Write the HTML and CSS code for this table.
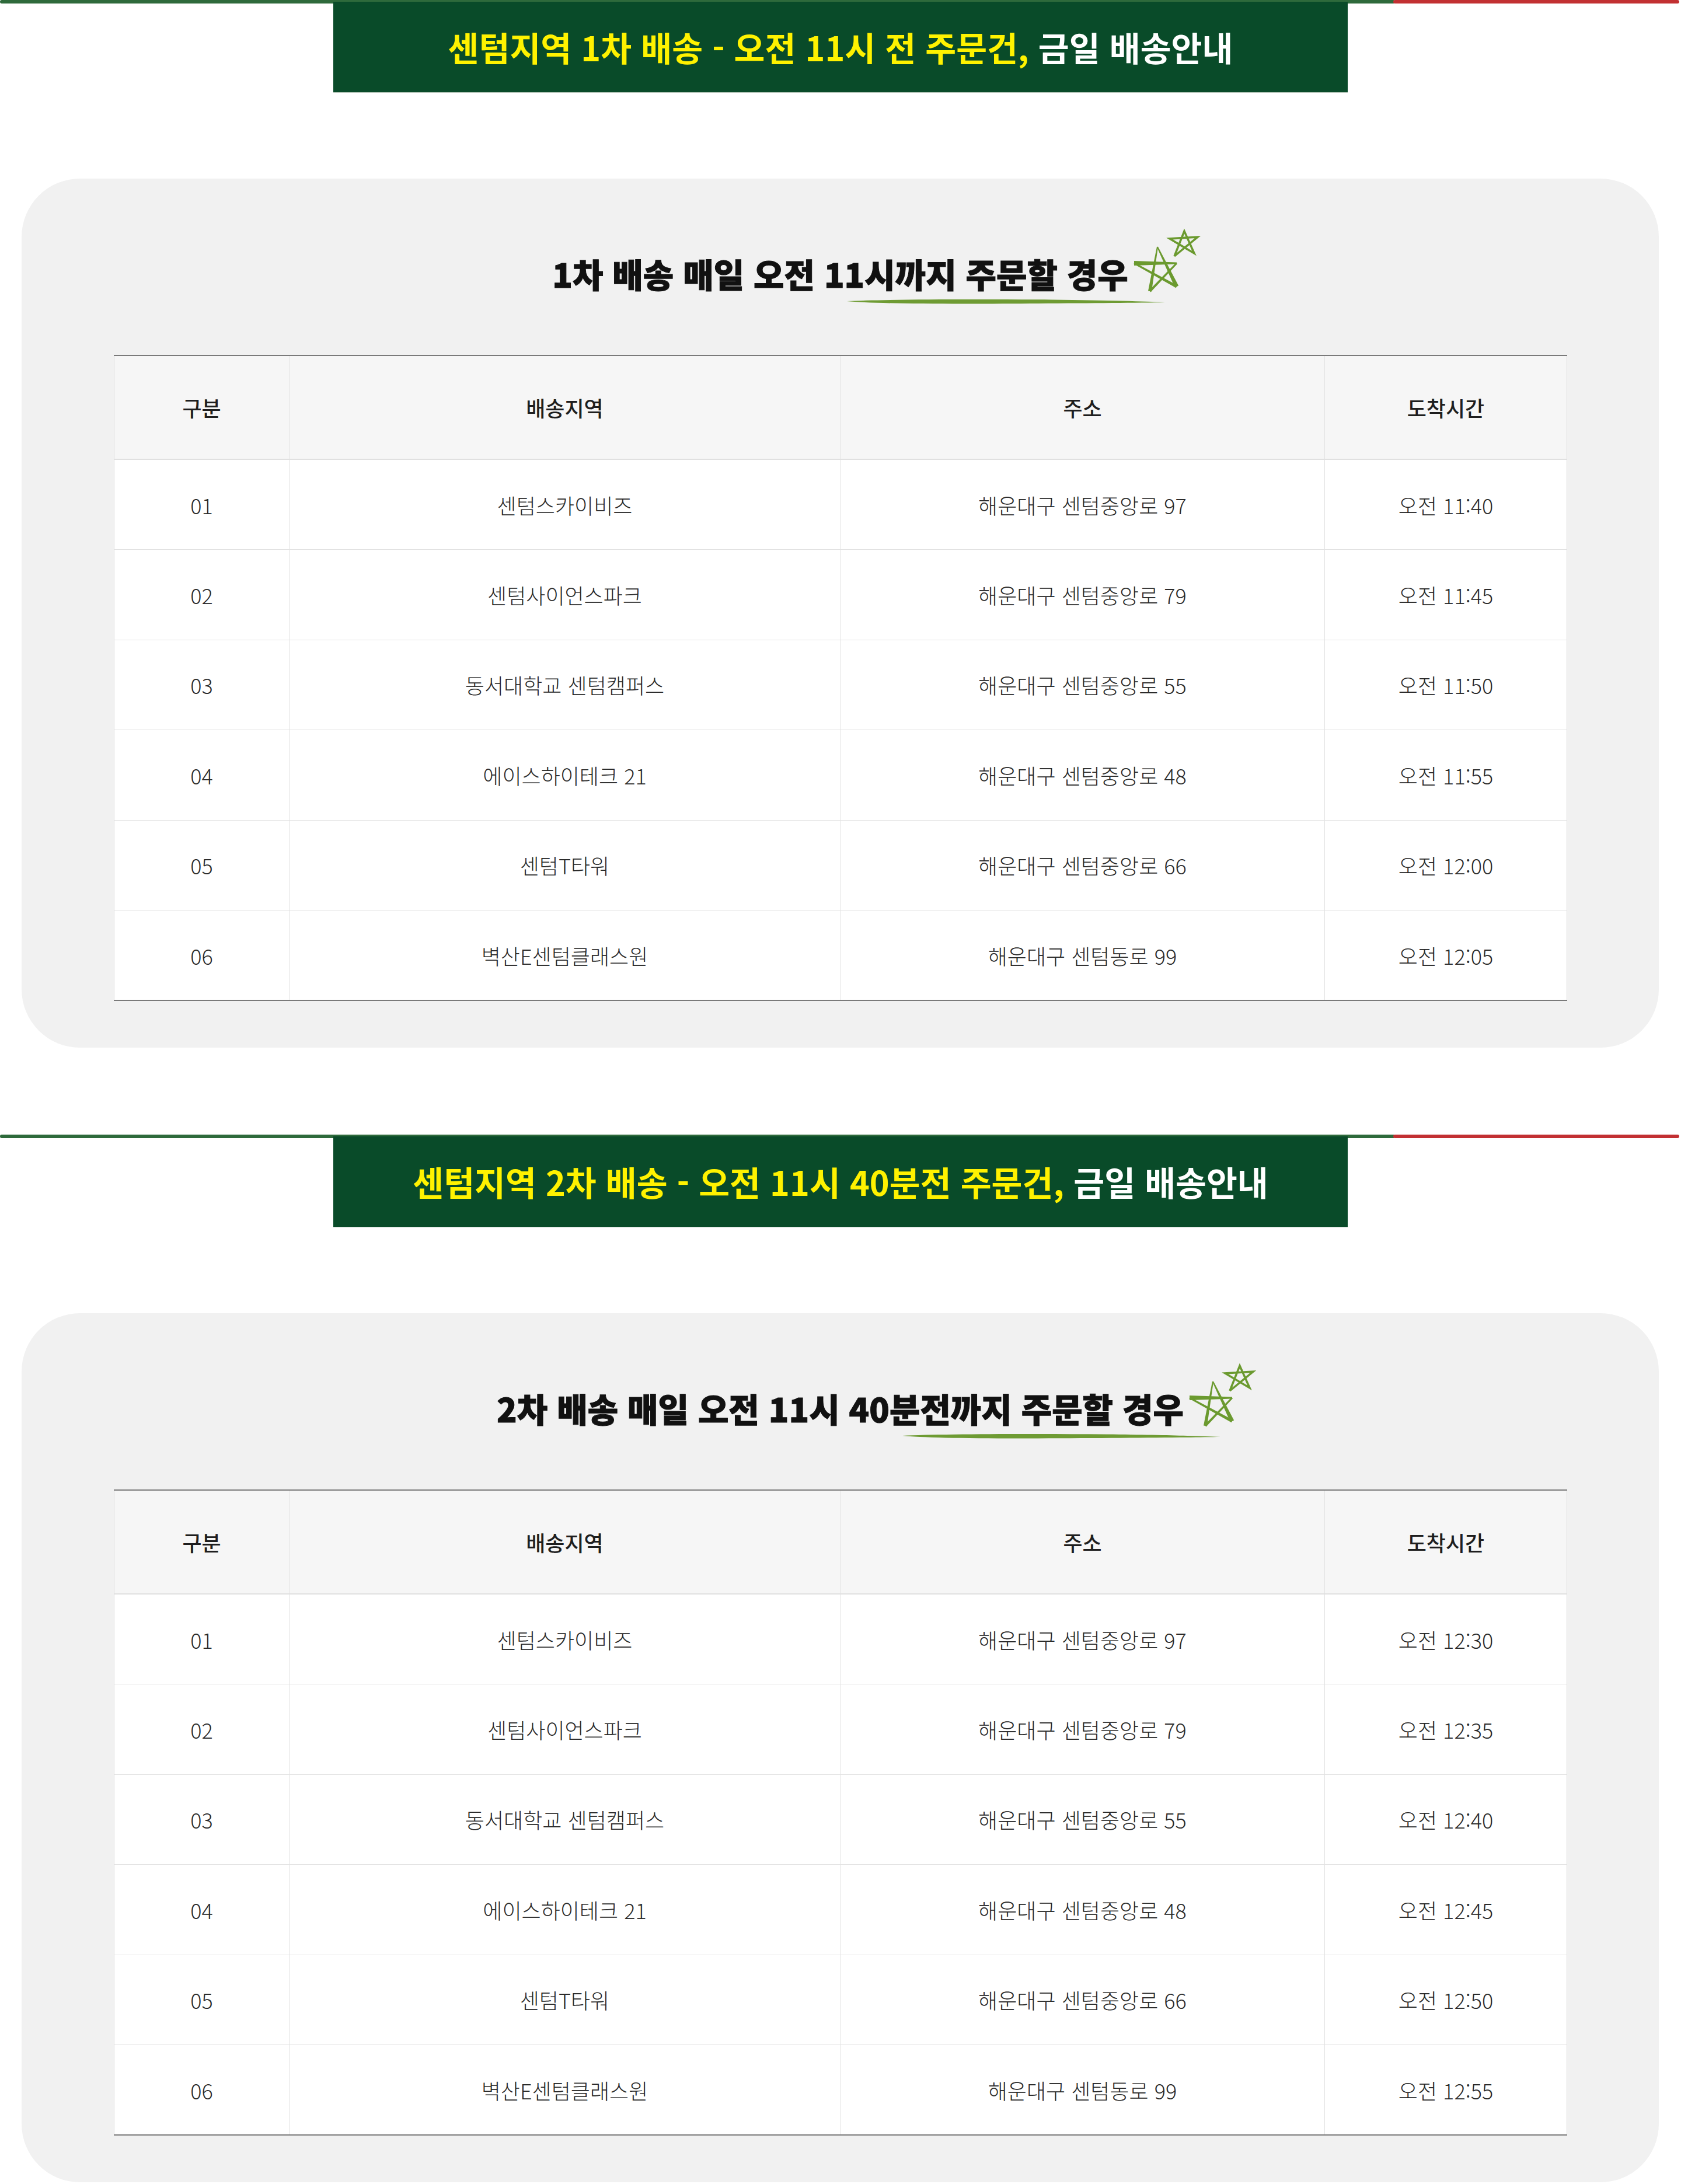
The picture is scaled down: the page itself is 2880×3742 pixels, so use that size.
FILE: index.html
```html
<!DOCTYPE html>
<html lang="ko">
<head>
<meta charset="utf-8">
<title>센텀지역 배송안내</title>
<link rel="stylesheet" href="styles.css">
</head>
<body>
<div class="page">
  <section class="section">
    <div class="topline"><span class="tl-green"></span><span class="tl-red"></span></div>
    <div class="banner"><p><span class="hl">센텀지역 1차 배송 - 오전 11시 전 주문건,</span> 금일 배송안내</p></div>
    <div class="card">
      <div class="title-wrap">
        <h2 class="title">1차 배송 매일 오전 11시까지 주문할 경우<svg class="deco" viewBox="0 0 610 140" width="610" height="140" aria-hidden="true"><g transform="translate(0,5)"><path class="brush" d="M0 120 C 60 117, 200 116.5, 350 117.5 C 450 118.5, 510 120.5, 545 122 C 480 123, 350 124, 200 124.5 C 100 124.5, 30 123, 0 120 Z"/><polygon class="st" points="492,51 565,53.5 565,56.5 492,59"/><polygon class="st" points="563.9,54 517.6,101.6 520.4,104.4 566.1,56"/><polygon class="st" points="521.96,103.5 533,27.2 531,26.8 516.04,102.5"/><polygon class="st" points="531.1,27.4 561.85,96.5 568.15,93.5 532.9,26.6"/><polygon class="st" points="566.2,92.8 492.7,53.7 491.3,56.3 563.8,97.2"/><polyline class="st-small" points="561,43 578,0 595,38 553,13 601,10 561,43"/></g></svg></h2>
      </div>
      <table class="tbl">
        <colgroup><col class="c1"><col class="c2"><col class="c3"><col class="c4"></colgroup>
        <thead><tr><th>구분</th><th>배송지역</th><th>주소</th><th>도착시간</th></tr></thead>
        <tbody>
          <tr><td>01</td><td>센텀스카이비즈</td><td>해운대구 센텀중앙로 97</td><td>오전 11:40</td></tr>
          <tr><td>02</td><td>센텀사이언스파크</td><td>해운대구 센텀중앙로 79</td><td>오전 11:45</td></tr>
          <tr><td>03</td><td>동서대학교 센텀캠퍼스</td><td>해운대구 센텀중앙로 55</td><td>오전 11:50</td></tr>
          <tr><td>04</td><td>에이스하이테크 21</td><td>해운대구 센텀중앙로 48</td><td>오전 11:55</td></tr>
          <tr><td>05</td><td>센텀T타워</td><td>해운대구 센텀중앙로 66</td><td>오전 12:00</td></tr>
          <tr><td>06</td><td>벽산E센텀클래스원</td><td>해운대구 센텀동로 99</td><td>오전 12:05</td></tr>
        </tbody>
      </table>
    </div>
  </section>

  <section class="section">
    <div class="topline"><span class="tl-green"></span><span class="tl-red"></span></div>
    <div class="banner"><p><span class="hl">센텀지역 2차 배송 - 오전 11시 40분전 주문건,</span> 금일 배송안내</p></div>
    <div class="card">
      <div class="title-wrap">
        <h2 class="title">2차 배송 매일 오전 11시 40분전까지 주문할 경우<svg class="deco" viewBox="0 0 610 140" width="610" height="140" aria-hidden="true"><g transform="translate(0,5)"><path class="brush" d="M0 120 C 60 117, 200 116.5, 350 117.5 C 450 118.5, 510 120.5, 545 122 C 480 123, 350 124, 200 124.5 C 100 124.5, 30 123, 0 120 Z"/><polygon class="st" points="492,51 565,53.5 565,56.5 492,59"/><polygon class="st" points="563.9,54 517.6,101.6 520.4,104.4 566.1,56"/><polygon class="st" points="521.96,103.5 533,27.2 531,26.8 516.04,102.5"/><polygon class="st" points="531.1,27.4 561.85,96.5 568.15,93.5 532.9,26.6"/><polygon class="st" points="566.2,92.8 492.7,53.7 491.3,56.3 563.8,97.2"/><polyline class="st-small" points="561,43 578,0 595,38 553,13 601,10 561,43"/></g></svg></h2>
      </div>
      <table class="tbl">
        <colgroup><col class="c1"><col class="c2"><col class="c3"><col class="c4"></colgroup>
        <thead><tr><th>구분</th><th>배송지역</th><th>주소</th><th>도착시간</th></tr></thead>
        <tbody>
          <tr><td>01</td><td>센텀스카이비즈</td><td>해운대구 센텀중앙로 97</td><td>오전 12:30</td></tr>
          <tr><td>02</td><td>센텀사이언스파크</td><td>해운대구 센텀중앙로 79</td><td>오전 12:35</td></tr>
          <tr><td>03</td><td>동서대학교 센텀캠퍼스</td><td>해운대구 센텀중앙로 55</td><td>오전 12:40</td></tr>
          <tr><td>04</td><td>에이스하이테크 21</td><td>해운대구 센텀중앙로 48</td><td>오전 12:45</td></tr>
          <tr><td>05</td><td>센텀T타워</td><td>해운대구 센텀중앙로 66</td><td>오전 12:50</td></tr>
          <tr><td>06</td><td>벽산E센텀클래스원</td><td>해운대구 센텀동로 99</td><td>오전 12:55</td></tr>
        </tbody>
      </table>
    </div>
  </section>
</div>
</body>
</html>
```

FILE: styles.css
```css
* { box-sizing: border-box; }

html, body {
  margin: 0;
  padding: 0;
  background: #ffffff;
}

body {
  font-family: "Noto Sans CJK KR", "Noto Sans", sans-serif;
  color: #333333;
}

.page {
  width: 2880px;
  padding-bottom: 7px;
}

.section {
  padding-bottom: 149px;
}

.section:last-child {
  padding-bottom: 0;
}

/* top colour line */
.topline {
  display: flex;
  height: 6px;
  padding-right: 3px;
}

.tl-green {
  width: 2390px;
  background: #2e6a3b;
  border-radius: 3px;
}

.tl-red {
  flex: 1;
  margin-left: -3px;
  background: #c23032;
  border-radius: 3px;
}

/* green banner */
.banner {
  position: relative;
  width: 1738px;
  height: 155px;
  margin: -3px auto 0;
  background: #094b29;
  box-shadow: 0 1px 0 #b9c9bd;
  display: flex;
  align-items: center;
  justify-content: center;
}

.banner p {
  margin: 0;
  font-size: 57.5px;
  font-weight: 700;
  line-height: 1;
  color: #ffffff;
  white-space: nowrap;
}

.banner .hl {
  color: #fff200;
}

/* grey card */
.card {
  margin: 148px 38px 0 37px;
  padding: 135px 158px 80px;
  background: #f1f1f1;
  border-radius: 100px;
}

.title-wrap {
  text-align: center;
  margin-bottom: 110px;
}

.title {
  position: relative;
  display: inline-block;
  margin: 0;
  font-size: 57px;
  line-height: 55px;
  font-weight: 900;
  color: #111111;
  -webkit-text-stroke: 1px #111111;
  white-space: nowrap;
}

.deco {
  position: absolute;
  left: calc(100% - 482px);
  top: -50px;
  overflow: visible;
}

.deco .brush {
  fill: #6e9b33;
}

.deco .st {
  fill: #6b9a2f;
}

.deco .st-small {
  fill: none;
  stroke: #6b9a2f;
  stroke-width: 3.5;
  stroke-linejoin: miter;
  stroke-miterlimit: 10;
}

/* table */
.tbl {
  width: 100%;
  table-layout: fixed;
  border-collapse: collapse;
  border-top: 2px solid #7a7a7a;
  border-bottom: 2px solid #7a7a7a;
}

.c1 { width: 300px; }
.c2 { width: 944px; }
.c3 { width: 830px; }
.c4 { width: 415px; }

.tbl th,
.tbl td {
  text-align: center;
  vertical-align: middle;
  border: 1px solid #e2e2e2;
  padding: 0;
}

.tbl tr > :first-child { border-left: 1px solid #dcdcdc; }
.tbl tr > :last-child { border-right: 1px solid #dcdcdc; }

.tbl th {
  height: 178px;
  background: #f6f6f6;
  font-size: 36px;
  font-weight: 500;
  color: #1e1e1e;
}

.tbl td {
  height: 154.5px;
  background: #ffffff;
  font-size: 36px;
  font-weight: 300;
  color: #2a2a2a;
}

.tbl tbody tr:first-child td {
  border-top: 2px solid #e0e0e0;
}
```
